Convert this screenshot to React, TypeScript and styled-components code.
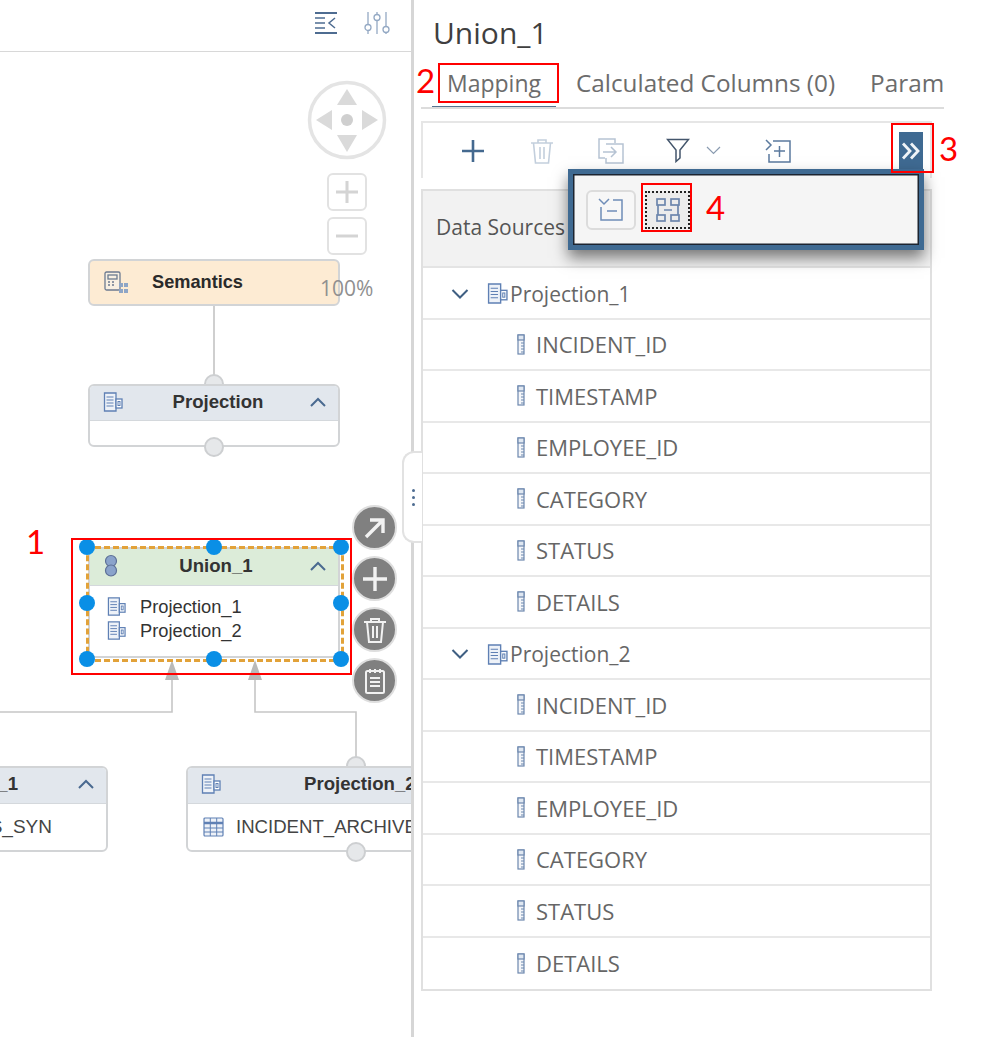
import React from 'react';
import styled, { createGlobalStyle } from 'styled-components';

const GlobalStyle = createGlobalStyle`
  html, body {
    margin: 0;
    padding: 0;
    background: #ffffff;
    font-family: "Open Sans", "Liberation Sans", sans-serif;
  }
`;

const COLUMNS = ['INCIDENT_ID', 'TIMESTAMP', 'EMPLOYEE_ID', 'CATEGORY', 'STATUS', 'DETAILS'];
const HANDLES = [
  [87, 547], [214, 547], [341, 547],
  [87, 603], [341, 603],
  [87, 659], [214, 659], [341, 659],
];

function ProjectionIcon({ size = 20, color = '#5f80b4' }: { size?: number; color?: string }) {
  return (
    <svg width={size} height={size} viewBox="0 0 20 20" fill="none" stroke={color} strokeWidth="1.3">
      <path d="M1.500 1h11.500V19H1.500z" fill="#eef2f8" />
      <path d="M3.500 5h7M3.500 8h7M3.500 11h7M3.500 14h7" strokeWidth="1" />
      <rect x="13" y="7" width="6" height="9" fill="#ffffff" />
      <rect x="15" y="9.500" width="2" height="4" strokeWidth="1" />
    </svg>
  );
}

function ColumnIcon() {
  return (
    <svg width="8" height="21" viewBox="0 0 8 21" fill="none" stroke="#6d88ae" strokeWidth="1.2">
      <rect x="1" y="1" width="6" height="19" fill="#f4f6f9" />
      <rect x="1" y="1" width="6" height="5" fill="#dfe7f1" />
      <path d="M4 9h3M4 12h3M4 15h3M4 18h3" strokeWidth="1" />
    </svg>
  );
}

function TableIcon() {
  return (
    <svg width="21" height="20" viewBox="0 0 21 20" fill="none" stroke="#5f80b4" strokeWidth="1.2">
      <rect x="1" y="1" width="19" height="18" rx="1" fill="#eef2f8" />
      <path d="M1 6h19" strokeWidth="2.400" />
      <path d="M7.300 1v18M13.700 1v18M1 11h19M1 15h19" strokeWidth="1" />
    </svg>
  );
}

function SemanticsIcon() {
  return (
    <svg width="26" height="24" viewBox="0 0 26 24" fill="none" stroke="#6c7a90" strokeWidth="1.3">
      <rect x="2" y="1" width="15" height="18" rx="1.500" fill="#f7efe2" />
      <rect x="5" y="4" width="9" height="4" />
      <path d="M5 11h2M9 11h2M5 14h2M9 14h2" strokeWidth="1.400" />
      <g fill="#8ea5c6" stroke="none">
        <rect x="16" y="12" width="4" height="4" />
        <rect x="21" y="12" width="4" height="4" />
        <rect x="16" y="18" width="4" height="4" />
        <rect x="21" y="18" width="4" height="4" />
      </g>
    </svg>
  );
}

function UnionIcon() {
  return (
    <svg width="16" height="24" viewBox="0 0 16 24" fill="#8aa3cb" stroke="#5d7097" strokeWidth="1.2">
      <circle cx="8" cy="7" r="5.500" />
      <circle cx="8" cy="16.500" r="5.500" />
    </svg>
  );
}

function Chevron({ color = '#4a6a90' }: { color?: string }) {
  return (
    <svg width="18" height="10" viewBox="0 0 18 10" fill="none" stroke={color} strokeWidth="2">
      <path d="M2 9l7-7 7 7" />
    </svg>
  );
}

function Canvas() {
  return (
    <CanvasArea>
      <CanvasToolbar>
        <svg width="24" height="24" viewBox="0 0 24 24" fill="none" stroke="#4e6c91" strokeWidth="1.500">
          <path d="M1 2h22M1 22h22" strokeWidth="2" />
          <path d="M1 7h10M1 12h10M1 17h10M21 7l-6 5 6 5" />
        </svg>
        <svg width="26" height="24" viewBox="0 0 26 24" fill="none" stroke="#94a9c4" strokeWidth="1.300">
          <path d="M4 1v13M4 19v4M13 1v3M13 9v14M22 1v15M22 21v2" />
          <circle cx="4" cy="16.500" r="3" />
          <circle cx="13" cy="6.500" r="3" />
          <circle cx="22" cy="18.500" r="3" />
        </svg>
      </CanvasToolbar>

      <Connectors width="411" height="1037" viewBox="0 0 411 1037" fill="none">
        <path d="M214 306V376" stroke="#cfcfcf" strokeWidth="2" />
        <path d="M172 676V712H0" stroke="#c6c6c6" strokeWidth="1.600" />
        <path d="M255 676V712H356V760" stroke="#c6c6c6" strokeWidth="1.600" />
        <path d="M172 660l-7 20h14zM255 660l-7 20h14z" fill="#b9b9b9" />
      </Connectors>

      <NavControl width="82" height="82" viewBox="0 0 82 82" fill="none">
        <circle cx="41" cy="41" r="37.500" stroke="#e4e4e4" strokeWidth="3.500" />
        <path d="M41 10l10 16H31zM41 73L31 56h20zM10 41l16-10v20zM72 41L56 31v20z" fill="#dadada" />
        <circle cx="41" cy="41" r="6" fill="#cfcfcf" />
      </NavControl>
      <ZoomButton $top={173}>
        <svg width="24" height="24" viewBox="0 0 24 24" stroke="#d4d4d4" strokeWidth="3">
          <path d="M1 12h22M12 1v22" />
        </svg>
      </ZoomButton>
      <ZoomButton $top={217}>
        <svg width="24" height="24" viewBox="0 0 24 24" stroke="#d4d4d4" strokeWidth="3">
          <path d="M1 12h22" />
        </svg>
      </ZoomButton>

      <Node $left={88} $top={259} $width={252} $height={47} $bg="#fdebd3">
        <SemanticsHeader>
          <SemanticsIcon />
          <NodeTitle>Semantics</NodeTitle>
        </SemanticsHeader>
      </Node>
      <ZoomText>100%</ZoomText>

      <Port $x={214} $y={384} />
      <Node $left={88} $top={384} $width={252} $height={63} $bg="#ffffff">
        <NodeHeader $bg="#e2e7ed" $height={35}>
          <ProjectionIcon />
          <HeaderTitle>Projection</HeaderTitle>
          <Chevron />
        </NodeHeader>
      </Node>
      <Port $x={214} $y={447} />

      <Node $left={88} $top={547} $width={252} $height={111} $bg="#ffffff">
        <NodeHeader $bg="#dcecd9" $height={37}>
          <UnionIcon />
          <HeaderTitle>Union_1</HeaderTitle>
          <Chevron />
        </NodeHeader>
        <NodeBody>
          <SourceRow><ProjectionIcon size={19} />Projection_1</SourceRow>
          <SourceRow><ProjectionIcon size={19} />Projection_2</SourceRow>
        </NodeBody>
      </Node>
      <Selection />
      {HANDLES.map(([x, y]) => (
        <Handle key={`${x}-${y}`} $x={x} $y={y} />
      ))}

      <ActionColumn>
        <ActionButton>
          <svg width="26" height="26" viewBox="0 0 26 26" fill="none" stroke="#f2f2f2" strokeWidth="3.400">
            <path d="M4 22L21 5M8 5h13v13" />
          </svg>
        </ActionButton>
        <ActionButton>
          <svg width="26" height="26" viewBox="0 0 26 26" fill="none" stroke="#f2f2f2" strokeWidth="3.400">
            <path d="M1 13h24M13 1v24" />
          </svg>
        </ActionButton>
        <ActionButton>
          <svg width="24" height="26" viewBox="0 0 24 26" fill="none" stroke="#f2f2f2" strokeWidth="2">
            <path d="M1 5h22M8 5V2h8v3M4 5l2 20h12l2-20M10 9v12M14 9v12" />
          </svg>
        </ActionButton>
        <ActionButton>
          <svg width="22" height="26" viewBox="0 0 22 26" fill="none" stroke="#f2f2f2" strokeWidth="2">
            <rect x="2" y="3" width="18" height="22" rx="1.500" />
            <path d="M6 1v4M11 1v4M16 1v4M6 10h10M6 14h10M6 18h10" />
          </svg>
        </ActionButton>
      </ActionColumn>

      <Node $left={-130} $top={766} $width={238} $height={86} $bg="#ffffff">
        <NodeHeader $bg="#e2e7ed" $height={36}>
          <span />
          <LeftNodeTitle>Projection_1</LeftNodeTitle>
          <Chevron />
        </NodeHeader>
        <LeftNodeBody>INCIDENTS_SYN</LeftNodeBody>
      </Node>

      <Port $x={356} $y={766} />
      <Node $left={186} $top={766} $width={300} $height={86} $bg="#ffffff">
        <NodeHeader $bg="#e2e7ed" $height={36}>
          <ProjectionIcon />
          <WideNodeTitle>Projection_2</WideNodeTitle>
        </NodeHeader>
        <TableRow><TableIcon />INCIDENT_ARCHIVE</TableRow>
      </Node>
      <Port $x={356} $y={852} />
    </CanvasArea>
  );
}

function Toolbar() {
  return (
    <ToolbarBox>
      <ToolIcon $width={69}>
        <svg width="24" height="24" viewBox="0 0 24 24" stroke="#44698f" strokeWidth="2.600">
          <path d="M1 12h22M12 1v22" />
        </svg>
      </ToolIcon>
      <ToolIcon $width={69}>
        <svg width="24" height="26" viewBox="0 0 24 26" fill="none" stroke="#c3cfdd" strokeWidth="1.600">
          <path d="M1 5h22M8 5V2h8v3M3.500 5l2 20h13l2-20M10 9v12M14 9v12" />
        </svg>
      </ToolIcon>
      <ToolIcon $width={69}>
        <svg width="26" height="26" viewBox="0 0 26 26" fill="none" stroke="#b6c3d3" strokeWidth="1.500">
          <path d="M17 5V1H1v19h6M8 6h17v19H8v-5" />
          <path d="M5 14h13M13 9l5 5-5 5" />
        </svg>
      </ToolIcon>
      <ToolIcon $width={36} $offset={15}>
        <svg width="24" height="25" viewBox="0 0 24 25" fill="none" stroke="#44566c" strokeWidth="1.500">
          <path d="M1.500 1.500h21L14 12v8l-4 3.500V12z" />
        </svg>
      </ToolIcon>
      <ToolIcon $width={34}>
        <svg width="15" height="9" viewBox="0 0 15 9" fill="none" stroke="#8a9bb0" strokeWidth="1.200">
          <path d="M1 1l6.500 6.500L14 1" />
        </svg>
      </ToolIcon>
      <ToolIcon $width={95}>
        <svg width="26" height="24" viewBox="0 0 26 24" fill="none" stroke="#5b7a9e" strokeWidth="1.500">
          <path d="M1 1l5 5-5 5M8 2h17v21H4v-8" />
          <path d="M9 12h11M14.500 7v11" />
        </svg>
      </ToolIcon>
      <OverflowButton>
        <svg width="20" height="18" viewBox="0 0 20 18" fill="none" stroke="#f0f4f8" strokeWidth="2.800">
          <path d="M2 1.500l7 7.500-7 7.500M10 1.500l7 7.500-7 7.500" />
        </svg>
      </OverflowButton>
    </ToolbarBox>
  );
}

function SourceGroup({ name }: { name: string }) {
  return (
    <>
      <GroupRow>
        <svg width="18" height="10" viewBox="0 0 18 10" fill="none" stroke="#3f5f82" strokeWidth="2">
          <path d="M1.500 1l7.500 7.500L16.500 1" />
        </svg>
        <ProjectionIcon size={21} />
        <span>{name}</span>
      </GroupRow>
      {COLUMNS.map((column) => (
        <ColumnRow key={column}>
          <ColumnIcon />
          <span>{column}</span>
        </ColumnRow>
      ))}
    </>
  );
}

export default function App() {
  return (
    <Page>
      <GlobalStyle />
      <Canvas />
      <Splitter />
      <Panel>
        <Title>Union_1</Title>
        <Tabs>
          <Tab $active>Mapping</Tab>
          <Tab>Calculated Columns (0)</Tab>
          <Tab>Parameters</Tab>
        </Tabs>
        <Toolbar />
        <MappingTable>
          <TableHead>Data Sources</TableHead>
          <SourceGroup name="Projection_1" />
          <SourceGroup name="Projection_2" />
        </MappingTable>
      </Panel>

      <SplitterGrip>
        <GripDot /><GripDot /><GripDot />
      </SplitterGrip>

      <Popover>
        <PopoverButton>
          <svg width="26" height="24" viewBox="0 0 26 24" fill="none" stroke="#6f8db8" strokeWidth="1.500">
            <path d="M1 1l5 5 5-5M15 2h9v20H3V9" />
            <path d="M9 13h10" />
          </svg>
        </PopoverButton>
        <FocusedButton>
          <svg width="24" height="24" viewBox="0 0 24 24" fill="none" stroke="#6d86ad" strokeWidth="1.700">
            <rect x="1" y="1" width="8" height="6" />
            <rect x="15" y="1" width="8" height="6" />
            <rect x="1" y="17" width="8" height="6" />
            <rect x="15" y="17" width="8" height="6" />
            <path d="M2 7v10M22 7v10M8 12h8" />
          </svg>
        </FocusedButton>
      </Popover>

      <RedBox $left={71} $top={538} $width={281} $height={137} />
      <RedBox $left={438} $top={63} $width={121} $height={40} />
      <RedBox $left={891} $top={123} $width={43} $height={50} />
      <RedBox $left={641} $top={183} $width={51} $height={49} />
      <RedNumber $left={26} $top={521}>1</RedNumber>
      <RedNumber $left={416} $top={60}>2</RedNumber>
      <RedNumber $left={939} $top={128}>3</RedNumber>
      <RedNumber $left={706} $top={187}>4</RedNumber>
    </Page>
  );
}

const Page = styled.div`
  position: relative;
  display: flex;
  width: 982px;
  height: 1037px;
  overflow: hidden;
  background: #ffffff;
`;

const CanvasArea = styled.div`
  position: relative;
  flex: 0 0 411px;
  height: 100%;
  overflow: hidden;
`;

const CanvasToolbar = styled.div`
  display: flex;
  justify-content: flex-end;
  align-items: center;
  gap: 26px;
  height: 45px;
  padding: 0 21px 6px 0;
  border-bottom: 1px solid #d8d8d8;
`;

const Connectors = styled.svg`
  position: absolute;
  left: 0;
  top: 0;
`;

const NavControl = styled.svg`
  position: absolute;
  left: 306px;
  top: 79px;
`;

const ZoomButton = styled.div<{ $top: number }>`
  position: absolute;
  left: 327px;
  top: ${(p) => p.$top}px;
  box-sizing: border-box;
  width: 40px;
  height: 38px;
  display: flex;
  align-items: center;
  justify-content: center;
  border: 2.500px solid #e2e2e2;
  border-radius: 6px;
  background: #ffffff;
`;

const ZoomText = styled.div`
  position: absolute;
  left: 320px;
  top: 277px;
  font-size: 21px;
  line-height: 22px;
  color: #909090;
`;

const Node = styled.div<{ $left: number; $top: number; $width: number; $height: number; $bg: string }>`
  position: absolute;
  left: ${(p) => p.$left}px;
  top: ${(p) => p.$top}px;
  box-sizing: border-box;
  width: ${(p) => p.$width}px;
  height: ${(p) => p.$height}px;
  background: ${(p) => p.$bg};
  border: 2px solid #d2d4d6;
  border-radius: 6px;
  overflow: hidden;
  font-family: "Liberation Sans", Arial, sans-serif;
  color: #333333;
`;

const SemanticsHeader = styled.div`
  display: flex;
  align-items: center;
  height: 100%;
  padding: 0 0 0 13px;
  box-sizing: border-box;
`;

const NodeTitle = styled.span`
  margin-left: 23px;
  font-size: 18.200px;
  font-weight: 700;
  color: #2a2a2a;
`;

const NodeHeader = styled.div<{ $bg: string; $height: number }>`
  display: flex;
  align-items: center;
  justify-content: space-between;
  box-sizing: border-box;
  height: ${(p) => p.$height}px;
  padding: 0 11px 3px 13px;
  background: ${(p) => p.$bg};
  border-bottom: 1px solid #d4d8dc;
`;

const HeaderTitle = styled.span`
  flex: 1;
  margin-left: 4px;
  text-align: center;
  font-size: 18.600px;
  font-weight: 700;
  color: #333333;
`;

const LeftNodeTitle = styled(HeaderTitle)`
  flex: 0 0 auto;
  margin-left: auto;
  margin-right: 59px;
`;

const WideNodeTitle = styled(HeaderTitle)`
  flex: 0 0 auto;
  margin-left: 83px;
  margin-right: auto;
`;

const NodeBody = styled.div`
  display: flex;
  flex-direction: column;
  gap: 1px;
  padding: 9px 0 0 17px;
`;

const SourceRow = styled.div`
  display: flex;
  align-items: center;
  gap: 14px;
  height: 23px;
  font-size: 18.300px;
  color: #333333;
`;

const LeftNodeBody = styled.div`
  margin-top: 12px;
  padding-right: 54px;
  text-align: right;
  white-space: nowrap;
  font-size: 19px;
  color: #444444;
`;

const TableRow = styled.div`
  display: flex;
  align-items: center;
  gap: 12px;
  height: 46px;
  padding-left: 15px;
  font-size: 18.600px;
  white-space: nowrap;
  color: #444444;
`;

const Port = styled.div<{ $x: number; $y: number }>`
  position: absolute;
  left: ${(p) => p.$x - 10}px;
  top: ${(p) => p.$y - 10}px;
  box-sizing: border-box;
  width: 20px;
  height: 20px;
  border-radius: 50%;
  border: 2px solid #cdcfd1;
  background: #e6e8ea;
`;

const Selection = styled.div`
  position: absolute;
  left: 86px;
  top: 546px;
  width: 252px;
  height: 110px;
  border: 3px dashed #e2a239;
`;

const Handle = styled.div<{ $x: number; $y: number }>`
  position: absolute;
  left: ${(p) => p.$x - 8}px;
  top: ${(p) => p.$y - 8}px;
  width: 16px;
  height: 16px;
  border-radius: 50%;
  background: #0a8fe6;
`;

const ActionColumn = styled.div`
  position: absolute;
  left: 352px;
  top: 505px;
  display: flex;
  flex-direction: column;
  gap: 6px;
`;

const ActionButton = styled.div`
  box-sizing: border-box;
  width: 45px;
  height: 45px;
  display: flex;
  align-items: center;
  justify-content: center;
  border-radius: 50%;
  background: #808080;
  border: 2px solid #dedede;
`;

const Splitter = styled.div`
  flex: 0 0 3px;
  height: 100%;
  background: #d6d6d6;
`;

const SplitterGrip = styled.div`
  position: absolute;
  left: 402px;
  top: 451px;
  box-sizing: border-box;
  width: 20px;
  height: 92px;
  display: flex;
  flex-direction: column;
  align-items: center;
  justify-content: center;
  gap: 4px;
  background: #ffffff;
  border: 2px solid #e2e2e2;
  border-right: none;
  border-radius: 12px 0 0 12px;
`;

const GripDot = styled.span`
  width: 3px;
  height: 3px;
  border-radius: 50%;
  background: #4e6c91;
`;

const Panel = styled.div`
  display: flex;
  flex-direction: column;
  flex: 0 0 530px;
  box-sizing: border-box;
  padding: 0 0 0 7px;
  overflow: hidden;
`;

const Title = styled.div`
  margin: 14px 0 0 12px;
  height: 38px;
  font-size: 30px;
  line-height: 38px;
  color: #3f3f3f;
`;

const Tabs = styled.div`
  display: flex;
  gap: 35px;
  height: 57px;
  padding-left: 26px;
  box-sizing: border-box;
  border-bottom: 2px solid #dcdcdc;
  white-space: nowrap;
  overflow: hidden;
`;

const Tab = styled.div<{ $active?: boolean }>`
  position: relative;
  padding-top: 16px;
  font-size: ${(p) => (p.$active ? '23px' : '24.300px')};
  line-height: 30px;
  color: #6c6c6c;

  &::after {
    content: '';
    display: ${(p) => (p.$active ? 'block' : 'none')};
    position: absolute;
    left: -15px;
    right: -15px;
    bottom: 0;
    height: 1.500px;
    background: #55728f;
  }
`;

const ToolbarBox = styled.div`
  display: flex;
  align-items: center;
  box-sizing: border-box;
  width: 511px;
  height: 57px;
  margin-top: 12px;
  padding-left: 15px;
  border: 2px solid #e6e6e6;
  border-bottom: none;
`;

const ToolIcon = styled.div<{ $width: number; $offset?: number }>`
  flex: 0 0 ${(p) => p.$width}px;
  margin-left: ${(p) => p.$offset ?? 0}px;
  display: flex;
  justify-content: center;
  align-items: center;
`;

const OverflowButton = styled.div`
  display: flex;
  align-items: center;
  justify-content: center;
  box-sizing: border-box;
  width: 24px;
  height: 41px;
  padding-bottom: 3px;
  margin-top: 4px;
  margin-left: auto;
  margin-right: 7px;
  background: #3f6a92;
`;

const MappingTable = styled.div`
  box-sizing: border-box;
  width: 511px;
  margin-top: 11px;
  border: 2px solid #e0e0e0;
`;

const TableHead = styled.div`
  display: flex;
  align-items: center;
  box-sizing: border-box;
  height: 77px;
  padding: 0 0 3px 13px;
  background: #f2f2f2;
  border-bottom: 2px solid #e4e4e4;
  font-size: 21px;
  color: #555555;
`;

const GroupRow = styled.div`
  display: flex;
  align-items: center;
  box-sizing: border-box;
  height: 51.500px;
  padding: 2px 0 0 28px;
  border-bottom: 2px solid #e8e8e8;
  font-size: 21px;
  color: #666666;

  & > svg:nth-child(2) {
    margin-left: 18px;
    margin-right: 2px;
  }
`;

const ColumnRow = styled.div`
  display: flex;
  align-items: center;
  gap: 11px;
  box-sizing: border-box;
  height: 51.500px;
  padding-left: 94px;
  border-bottom: 2px solid #e8e8e8;
  font-size: 22px;
  color: #666666;

  &:last-child {
    border-bottom: none;
  }
`;

const Popover = styled.div`
  position: absolute;
  left: 568px;
  top: 169px;
  box-sizing: border-box;
  width: 356px;
  height: 81px;
  display: flex;
  align-items: center;
  gap: 9px;
  padding: 0 0 0 13px;
  background: #f5f5f5;
  border: 5px solid #3f6a92;
  box-shadow: inset 0 0 0 1.500px #1c2430, 0 8px 14px rgba(0, 0, 0, 0.5);
`;

const PopoverButton = styled.div`
  box-sizing: border-box;
  width: 50px;
  height: 40px;
  display: flex;
  align-items: center;
  justify-content: center;
  border: 2px solid #dcdcdc;
  border-radius: 6px;
  background: #f7f7f7;
`;

const FocusedButton = styled.div`
  box-sizing: border-box;
  width: 45px;
  height: 38px;
  display: flex;
  align-items: center;
  justify-content: center;
  border: 2px dotted #222222;
  background: #ececec;
`;

const RedBox = styled.div<{ $left: number; $top: number; $width: number; $height: number }>`
  position: absolute;
  left: ${(p) => p.$left}px;
  top: ${(p) => p.$top}px;
  box-sizing: border-box;
  width: ${(p) => p.$width}px;
  height: ${(p) => p.$height}px;
  border: 2px solid #ff0000;
`;

const RedNumber = styled.div<{ $left: number; $top: number }>`
  position: absolute;
  left: ${(p) => p.$left}px;
  top: ${(p) => p.$top}px;
  font-family: Lato, "Liberation Sans", sans-serif;
  font-size: 33px;
  line-height: 40px;
  color: #ff0000;
`;
